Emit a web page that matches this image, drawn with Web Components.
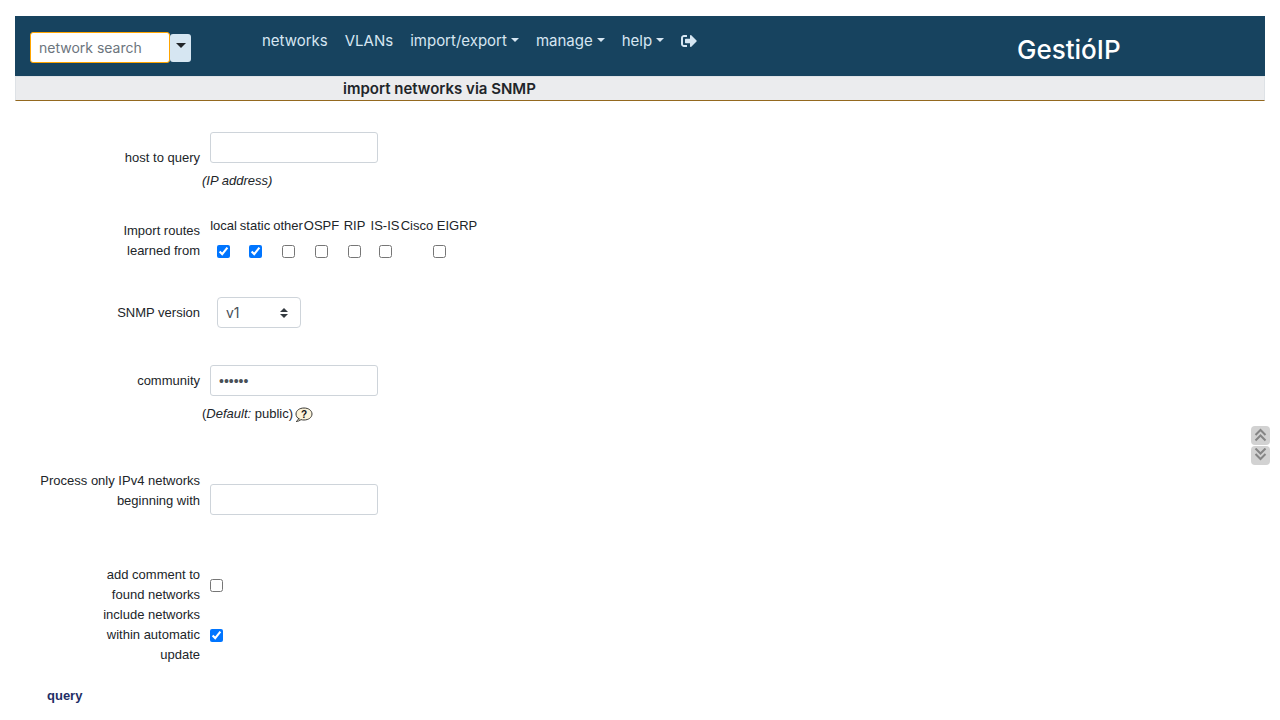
<!DOCTYPE html>
<html lang="en">
<head>
<meta charset="utf-8">
<title>GestióIP - import networks via SNMP</title>
<style>
body { margin: 16px 15px 0; background: #fff; color: #212529; font-family: Inter, "Liberation Sans", sans-serif; }
</style>
</head>
<body>
<gip-navbar></gip-navbar>
<gip-titlebar>import networks via SNMP</gip-titlebar>
<gip-snmp-form></gip-snmp-form>
<gip-scroller></gip-scroller>

<template id="navbar">
<style>
:host { display: grid; grid-template-columns: 247px 1fr 248px; height: 60px; background: #17435f; color: #d6e6f2; }
form { display: flex; align-items: center; padding: 3px 0 0 15px; }
input { box-sizing: border-box; width: 140px; height: 31px; margin: 0; padding: 4px 8px; border: 1px solid #ffa500; border-radius: 3px; background: #fff; font: 14px/20px Inter, sans-serif; color: #495057; outline: none; }
input::placeholder { color: #6c757d; opacity: 1; }
button { width: 21px; height: 28px; padding: 0 0 4px; border: 0; border-radius: 3px; background: #d6e6f2; color: #212529; display: flex; align-items: center; justify-content: center; }
nav { display: flex; gap: 17px; align-items: flex-start; padding-top: 13px; }
a { color: inherit; text-decoration: none; font-size: 15px; line-height: 24px; white-space: nowrap; }
.caret { display: inline-block; border: 4px solid transparent; border-top-color: currentColor; border-bottom: 0; vertical-align: 4px; }
a .caret { margin-left: 4px; }
button .caret { border-width: 5px 5px 0; }
.exit { display: flex; height: 24px; align-items: center; }
.brand { color: #fff; font-size: 26px; line-height: 32px; font-weight: 500; padding-top: 18px; }
</style>
<form>
<input type="text" placeholder="network search" aria-label="network search">
<button type="button" aria-label="search options"><span class="caret"></span></button>
</form>
<nav>
<a href="#networks">networks</a>
<a href="#vlans">VLANs</a>
<a href="#import">import/export<span class="caret"></span></a>
<a href="#manage">manage<span class="caret"></span></a>
<a href="#help">help<span class="caret"></span></a>
<a class="exit" href="#logout" aria-label="logout"><svg width="16" height="16" viewBox="0 0 512 512"><path fill="currentColor" d="M497 273L329 441c-15 15-41 4.500-41-17v-96H152c-13.300 0-24-10.700-24-24v-96c0-13.300 10.700-24 24-24h136V88c0-21.400 25.900-32 41-17l168 168c9.300 9.400 9.300 24.600 0 34zM192 436v-40c0-6.600-5.400-12-12-12H96c-17.700 0-32-14.300-32-32V160c0-17.700 14.300-32 32-32h84c6.600 0 12-5.400 12-12V76c0-6.600-5.400-12-12-12H96c-53 0-96 43-96 96v192c0 53 43 96 96 96h84c6.600 0 12-5.400 12-12z"/></svg></a>
</nav>
<a class="brand" href="#home">GestióIP</a>
</template>

<template id="titlebar">
<style>
:host { display: block; border: 1px solid #dee2e6; border-bottom-color: #94691f; background: #ebecee; padding-left: 327px; }
h1 { margin: 0; font-size: 15px; line-height: 23px; font-weight: 600; }
</style>
<h1><slot></slot></h1>
</template>

<template id="row">
<style>
:host { display: grid; grid-template-columns: 185px 1fr; column-gap: 10px; align-items: center; }
.label { text-align: right; }
.hint { grid-column: 2; margin-left: -8px; }
</style>
<div class="label"><slot name="label"></slot></div>
<div><slot></slot></div>
<div class="hint"><slot name="hint"></slot></div>
</template>

<template id="snmp-form">
<style>
:host { display: block; padding-top: 23px; font: 13px/20px "Liberation Sans", sans-serif; }
form { display: flex; flex-direction: column; }
input[type=text], input[type=password] { display: block; box-sizing: border-box; width: 168px; height: 31px; margin: 0; padding: 4px 8px; border: 1px solid #ced4da; border-radius: 3px; background: #fff; color: #495057; font: 14px/20px "Liberation Sans", sans-serif; outline: none; }
input[type=checkbox] { display: block; width: 13px; height: 13px; margin: 0; accent-color: #0075ff; }
.stack { display: grid; gap: 8px; padding-top: 8px; }
.stack i { margin-left: -8px; }
.routes { margin-top: 25px; }
.route-list { display: grid; grid-template-columns: 27px 32px 30px 33px 29px 28px 76px; column-gap: 2px; height: 49px; }
.route-list label { display: flex; flex-direction: column; align-items: center; gap: 9px; white-space: nowrap; }
.version { margin-top: 32px; }
.select { position: relative; width: 84px; margin-left: 7px; }
select { appearance: none; display: block; box-sizing: border-box; width: 100%; height: 31px; margin: 0; padding: 0 8px; border: 1px solid #ced4da; border-radius: 4px; background: #fff; color: #495057; font: 14px/20px Inter, sans-serif; }
.select svg { position: absolute; right: 13px; top: 10px; pointer-events: none; }
.community { margin-top: 37px; }
.default { display: flex; align-items: center; gap: 2px; padding-top: 8px; }
.help { display: flex; height: 20px; align-items: center; }
.prefix { margin-top: 42px; }
.prefix input { margin-top: 18px; }
.comment { margin-top: 50px; }
.submit { align-self: flex-start; margin: 21px 0 0 32px; padding: 0; border: 0; background: none; color: #1f2f66; font: bold 13px/20px "Liberation Sans", sans-serif; }
</style>
<form>
<gip-row>
<label slot="label" for="host">host to query</label>
<div class="stack"><input id="host" type="text"><i>(IP address)</i></div>
</gip-row>
<gip-row class="routes">
<span slot="label">Import routes<br>learned from</span>
<div class="route-list">
<label>local<input type="checkbox" checked></label>
<label>static<input type="checkbox" checked></label>
<label>other<input type="checkbox"></label>
<label>OSPF<input type="checkbox"></label>
<label>RIP<input type="checkbox"></label>
<label>IS-IS<input type="checkbox"></label>
<label>Cisco EIGRP<input type="checkbox"></label>
</div>
</gip-row>
<gip-row class="version">
<label slot="label" for="version">SNMP version</label>
<div class="select"><select id="version"><option>v1</option><option>v2c</option><option>v3</option></select>
<svg width="8" height="12" viewBox="0 0 8 12"><path fill="#343a40" d="M0 5l4-4 4 4zM0 7h8l-4 4z"/></svg></div>
</gip-row>
<gip-row class="community">
<label slot="label" for="community">community</label>
<input id="community" type="password" value="public">
<div class="default" slot="hint"><span>(<i>Default:</i> public)</span>
<a class="help" href="#help" aria-label="help"><svg width="18" height="16" viewBox="0 0 18 16"><path d="M4.500 13C2 12 1 10 1 8 1 4.500 4.500 2 9 2s8 2.500 8 6-3.500 6-8 6c-1 0-2-.1-3-.4C4.500 14.700 3 15.500 1.200 15.500c1.300-.8 1.900-1.500 2-2.700z" fill="#fcf3d9" stroke="#3a3935"/><text x="9" y="12" text-anchor="middle" font-family="Liberation Sans" font-weight="700" font-size="10" fill="#111">?</text></svg></a></div>
</gip-row>
<gip-row class="prefix">
<label slot="label" for="prefix">Process only IPv4 networks<br>beginning with</label>
<input id="prefix" type="text">
</gip-row>
<gip-row class="comment">
<label slot="label" for="comment">add comment to<br>found networks</label>
<input id="comment" type="checkbox">
</gip-row>
<gip-row>
<label slot="label" for="auto">include networks<br>within automatic<br>update</label>
<input id="auto" type="checkbox" checked>
</gip-row>
<button class="submit" type="button">query</button>
</form>
</template>

<template id="scroller">
<style>
:host { position: fixed; right: 10px; top: 426px; display: grid; gap: 1px; }
button { width: 19px; height: 19px; padding: 0; border: 0; border-radius: 4px; background: #d2d2d2; display: grid; place-items: center; }
path { fill: none; stroke: #858585; stroke-width: 2; }
</style>
<button type="button" aria-label="scroll to top"><svg width="13" height="15" viewBox="0 0 13 15"><path d="M1.500 7l5-5 5 5M1.500 12.500l5-5 5 5"/></svg></button>
<button type="button" aria-label="scroll to bottom"><svg width="13" height="15" viewBox="0 0 13 15"><path d="M1.500 0.500l5 5 5-5M1.500 6l5 5 5-5"/></svg></button>
</template>

<script>
const define = (tag, id) => customElements.define(tag, class extends HTMLElement {
  constructor() {
    super();
    this.attachShadow({ mode: "open" }).append(document.getElementById(id).content.cloneNode(true));
  }
});
define("gip-row", "row");
define("gip-navbar", "navbar");
define("gip-titlebar", "titlebar");
define("gip-snmp-form", "snmp-form");
define("gip-scroller", "scroller");
</script>
</body>
</html>
